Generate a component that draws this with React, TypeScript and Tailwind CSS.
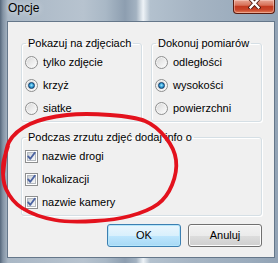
import React from "react";

type Pt = [number, number];

function smoothPath(pts: Pt[]): string {
  let d = `M${pts[0][0]},${pts[0][1]}`;
  for (let i = 0; i < pts.length - 1; i++) {
    const p0 = pts[i - 1] || pts[i];
    const p1 = pts[i];
    const p2 = pts[i + 1];
    const p3 = pts[i + 2] || p2;
    const c1x = p1[0] + (p2[0] - p0[0]) / 6;
    const c1y = p1[1] + (p2[1] - p0[1]) / 6;
    const c2x = p2[0] - (p3[0] - p1[0]) / 6;
    const c2y = p2[1] - (p3[1] - p1[1]) / 6;
    d += ` C${c1x.toFixed(1)},${c1y.toFixed(1)} ${c2x.toFixed(1)},${c2y.toFixed(1)} ${p2[0]},${p2[1]}`;
  }
  return d;
}

const ellipsePts: Pt[] = [
  [3, 174],
  [9, 142],
  [30, 124],
  [67, 115],
  [110, 115],
  [145, 121],
  [166, 138],
  [176, 160],
  [172, 185],
  [158, 204],
  [130, 216],
  [95, 221],
  [55, 220],
  [22, 208],
  [6, 189],
  [3, 166],
  [8, 146],
];

function Radio({ checked }: { checked?: boolean }) {
  return (
    <span className="flex h-[13px] w-[13px] shrink-0 items-center justify-center rounded-full border border-[#8e8f8f] bg-[linear-gradient(135deg,#d4d4d4_0%,#e9e9e9_45%,#ffffff_100%)] shadow-[inset_0_0_0_1px_#f4f4f4]">
      {checked ? (
        <span className="h-[7px] w-[7px] rounded-full border border-[#0e3d6b] bg-[radial-gradient(circle_at_50%_45%,#a6ecff_0%,#3aa5dc_45%,#11518c_100%)]" />
      ) : null}
    </span>
  );
}

function Check() {
  return (
    <span className="relative flex h-[13px] w-[13px] shrink-0 items-center justify-center border border-[#8e8f8f] bg-white">
      <span className="h-[9px] w-[9px] border border-[#b4b9bf] bg-[linear-gradient(135deg,#c9ced4_0%,#e7e9ec_50%,#f7f7f7_100%)]" />
      <svg className="absolute left-0 top-0" width="11" height="11" viewBox="0 0 11 11">
        <path d="M2.2 5.4 L4.3 7.8 L8.8 1.8" stroke="#4b63a0" strokeWidth="1.9" fill="none" strokeLinecap="round" strokeLinejoin="round" />
      </svg>
    </span>
  );
}

function RadioRow({ label, checked }: { label: string; checked?: boolean }) {
  return (
    <div className="flex h-[23px] items-center gap-[5px] pl-[3px]">
      <Radio checked={checked} />
      <span className="text-[11px] leading-[13px] text-black">{label}</span>
    </div>
  );
}

function CheckRow({ label }: { label: string }) {
  return (
    <div className="flex h-[23px] items-center gap-[4px] pl-[3px]">
      <Check />
      <span className="text-[11px] leading-[13px] text-black">{label}</span>
    </div>
  );
}

function Group({ title, className, children }: { title: string; className: string; children: React.ReactNode }) {
  return (
    <fieldset
      className={`rounded-[3px] border border-[#d5dfe5] pt-[1px] shadow-[inset_1px_1px_0_#ffffff,1px_1px_0_#ffffff] ${className}`}
    >
      <legend className="ml-[4px] px-[2px] text-[11px] leading-[13px] text-black">{title}</legend>
      {children}
    </fieldset>
  );
}

export default function App() {
  return (
    <div className="relative h-[263px] w-[278px] overflow-hidden bg-[linear-gradient(90deg,#56687c_0px,#8393a4_3px,#a9b7c5_8px,#b7c3cf_30%,#a9b8c6_38%,#8d9eb0_45%,#a3b2c1_49%,#eef3f7_51.5%,#b3c1ce_54%,#a5b4c3_70%,#9aabbc_90%,#92a3b5_100%)] font-['Liberation_Sans',Arial,sans-serif]">
      {/* title bar */}
      <div className="flex h-[21px] items-start">
        <span className="ml-[8px] mt-[1px] text-[12px] leading-[15px] text-black [text-shadow:0_0_6px_rgba(255,255,255,0.8)]">
          Opcje
        </span>
        <div className="relative ml-auto mr-[3px] h-[14px] w-[42px] overflow-hidden rounded-b-[4px] border border-t-0 border-[#5a1c10] bg-[linear-gradient(180deg,#e8a594_0%,#d77058_40%,#c33a20_50%,#c9452a_75%,#e2805a_100%)] shadow-[inset_0_0_0_1px_rgba(255,220,210,0.45)]">
          <svg className="absolute left-[14px] top-[-2px]" width="13" height="11" viewBox="0 0 13 11">
            <path d="M2.5 1 L10.5 9.5 M10.5 1 L2.5 9.5" stroke="#4a160c" strokeWidth="4" strokeLinecap="square" />
            <path d="M2.5 1 L10.5 9.5 M10.5 1 L2.5 9.5" stroke="#ffffff" strokeWidth="2.3" strokeLinecap="square" />
          </svg>
        </div>
      </div>

      {/* client area */}
      <div className="ml-[7px] mr-[3px] flex h-[237px] flex-col border border-[#65778a] bg-[#f0f0f0] pl-[13px] pr-[12px] pt-[15px]">
        <div className="flex gap-[9px]">
          <Group title="Pokazuj na zdjęciach" className="h-[85px] w-[121px]">
            <RadioRow label="tylko zdjęcie" />
            <RadioRow label="krzyż" checked />
            <RadioRow label="siatke" />
          </Group>
          <Group title="Dokonuj pomiarów" className="h-[85px] w-[111px]">
            <RadioRow label="odległości" />
            <RadioRow label="wysokości" checked />
            <RadioRow label="powierzchni" />
          </Group>
        </div>
        <div className="mt-[9px]">
          <Group title="Podczas zrzutu zdjęć dodaj info o" className="h-[85px] w-[241px]">
            <CheckRow label="nazwie drogi" />
            <CheckRow label="lokalizacji" />
            <CheckRow label="nazwie kamery" />
          </Group>
        </div>
        <div className="mt-[8px] flex justify-end gap-[7px]">
          <button className="flex h-[23px] w-[74px] items-center justify-center rounded-[3px] border border-[#3c7fb1] bg-[linear-gradient(180deg,#eaf6fd_0%,#d9f0fc_50%,#bee6fd_51%,#a7d9f5_100%)] text-[11px] leading-[13px] text-black shadow-[inset_0_0_0_1px_#b5e6fb]">
            OK
          </button>
          <button className="flex h-[23px] w-[74px] items-center justify-center rounded-[3px] border border-[#707070] bg-[linear-gradient(180deg,#f2f2f2_0%,#ebebeb_50%,#dddddd_51%,#cfcfcf_100%)] text-[11px] leading-[13px] text-black shadow-[inset_0_0_0_1px_#fcfcfc]">
            Anuluj
          </button>
        </div>
      </div>

      {/* hand-drawn red ellipse */}
      <svg className="pointer-events-none absolute left-0 top-0" width="278" height="263" viewBox="0 0 278 263">
        <path d={smoothPath(ellipsePts)} stroke="#e3121d" strokeWidth="3.8" fill="none" strokeLinecap="round" strokeLinejoin="round" />
      </svg>
    </div>
  );
}
